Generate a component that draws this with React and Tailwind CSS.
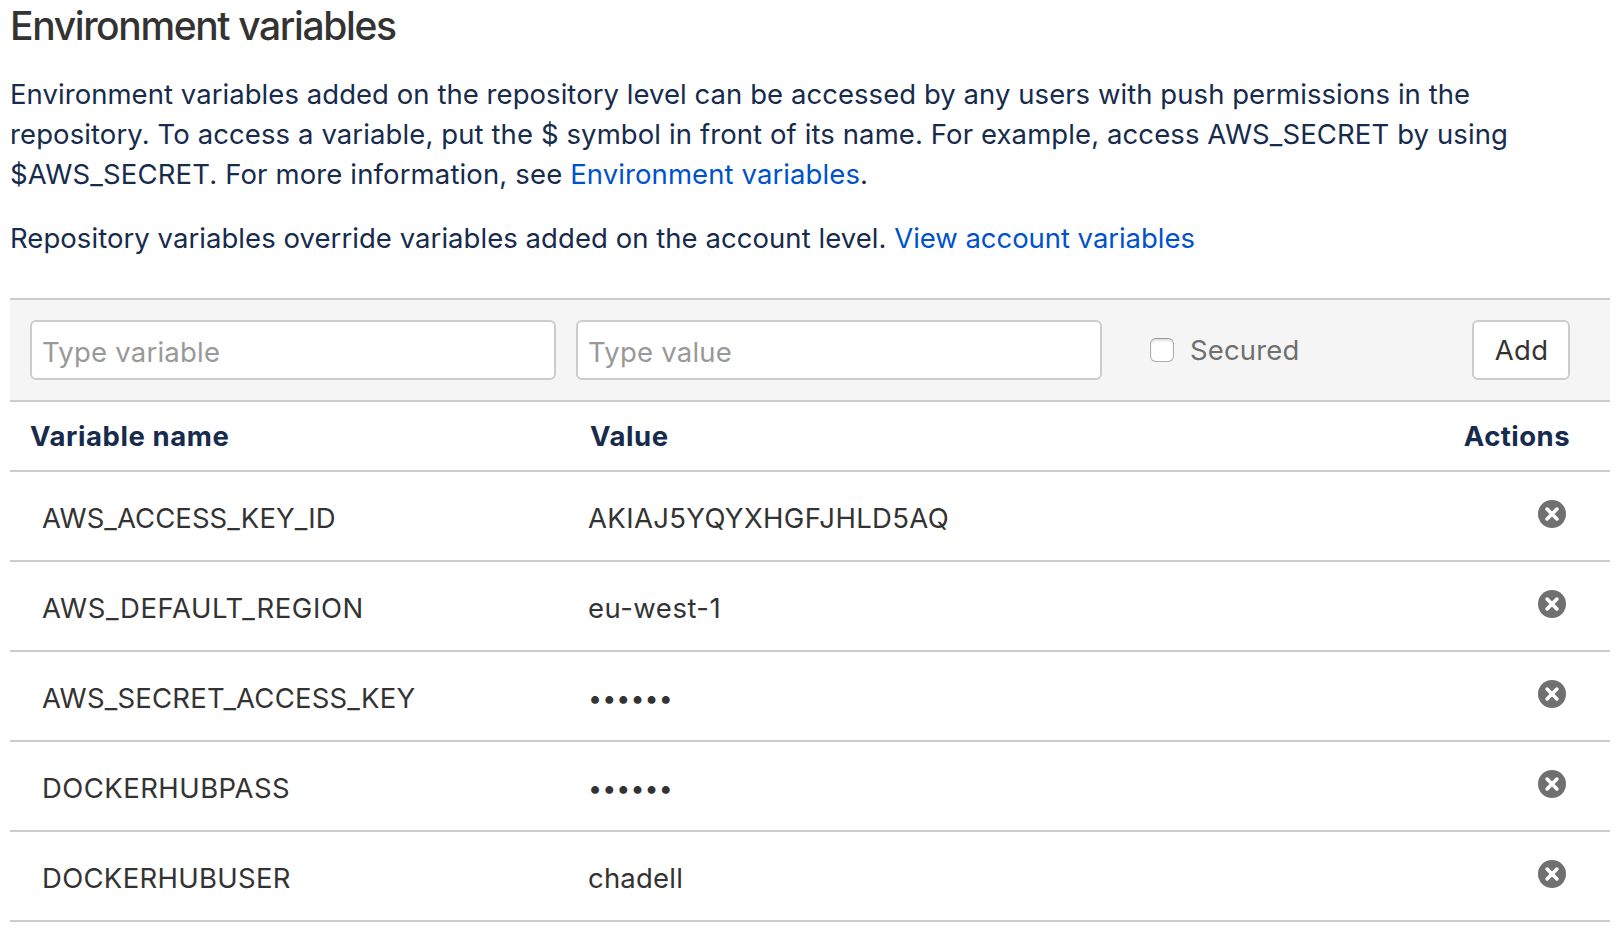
const variables = [
  { name: "AWS_ACCESS_KEY_ID", nameTracking: "tracking-[0.06px]", value: "AKIAJ5YQYXHGFJHLD5AQ", tracking: "tracking-[0.35px]" },
  { name: "AWS_DEFAULT_REGION", nameTracking: "tracking-[0.6px]", value: "eu-west-1", tracking: "tracking-[0.5px]" },
  { name: "AWS_SECRET_ACCESS_KEY", nameTracking: "tracking-[0.2px]", secured: true },
  { name: "DOCKERHUBPASS", nameTracking: "tracking-[0.45px]", secured: true },
  { name: "DOCKERHUBUSER", nameTracking: "tracking-[0.3px]", value: "chadell", tracking: "tracking-[0.2px]" },
];

function RemoveIcon() {
  return (
    <svg width="28" height="28" viewBox="0 0 28 28" className="block">
      <circle cx="14" cy="14" r="14" fill="#707070" />
      <path d="M9.1 9.1 18.9 18.9M18.9 9.1 9.1 18.9" stroke="#fff" strokeWidth="3.6" strokeLinecap="round" />
    </svg>
  );
}

function TextInput({ placeholder }) {
  return (
    <input
      type="text"
      placeholder={placeholder}
      className="h-[60px] w-[526px] rounded-[6px] border-2 border-[#ccc] bg-white px-[10px] pt-1 tracking-[0.23px] text-[#333] outline-none placeholder:text-[#999] placeholder:opacity-100"
    />
  );
}

function VariableRow({ name, nameTracking, value, secured, tracking }) {
  return (
    <div className="flex h-[90px] items-center border-b-2 border-[#ccc] pl-8 text-[#333]">
      <div className="w-[546px] pt-1">
        <span className={nameTracking}>{name}</span>
      </div>
      <div className="flex-1 pt-1">
        {secured ? (
          <span className="block text-[25px] leading-10 tracking-[0.08px]">••••••</span>
        ) : (
          <span className={tracking}>{value}</span>
        )}
      </div>
      <button type="button" aria-label="Remove" className="mr-11 mb-1">
        <RemoveIcon />
      </button>
    </div>
  );
}

export default function App() {
  return (
    <main className="h-[934px] overflow-hidden bg-white px-[10px] pt-[6px] font-[Inter,sans-serif] text-[27.5px] leading-10 text-[#172b4d]">
      <h1 className="text-[39px] leading-10 font-medium tracking-[-1.37px] text-[#333]">
        Environment variables
      </h1>
      <p className="mt-7 whitespace-nowrap">
        <span className="tracking-[0.05px]">
          Environment variables added on the repository level can be accessed by any users with push permissions in the
        </span>
        <br />
        <span className="tracking-[0.1px]">
          repository. To access a variable, put the $ symbol in front of its name. For example, access AWS_SECRET by using
        </span>
        <br />
        <span className="tracking-[0.14px]">
          $AWS_SECRET. For more information, see{" "}
          <a className="tracking-[0.09px] text-[#0052cc]">Environment variables</a>.
        </span>
      </p>
      <p className="mt-6 whitespace-nowrap tracking-[0.05px]">
        Repository variables override variables added on the account level.{" "}
        <a className="tracking-[-0.05px] text-[#0052cc]">View account variables</a>
      </p>

      <section className="mt-10 w-[1600px]">
        <form className="flex h-[104px] items-center border-y-2 border-[#ccc] bg-[#f5f5f5] pl-5">
          <TextInput placeholder="Type variable" />
          <div className="w-5" />
          <TextInput placeholder="Type value" />
          <label className="ml-12 flex flex-1 items-center gap-4 tracking-[0.16px] text-[#707070]">
            <span className="h-6 w-6 rounded-[6px] border border-[#acacac] border-t-[#989898] bg-white shadow-[inset_0_2px_2px_rgba(0,0,0,0.12)]" />
            Secured
          </label>
          <button type="button" className="mr-10 h-[60px] w-[98px] rounded-[6px] border-2 border-[#ccc] bg-white pl-px tracking-[0.3px] text-[#333]">
            Add
          </button>
        </form>

        <div className="flex h-[70px] items-center border-b-2 border-[#ccc] pl-5 font-bold">
          <div className="w-[560px] tracking-[0.58px]">Variable name</div>
          <div className="flex-1 tracking-[0.6px]">Value</div>
          <div className="mr-10 tracking-[0.45px]">Actions</div>
        </div>

        {variables.map((variable) => (
          <VariableRow key={variable.name} {...variable} />
        ))}
      </section>
    </main>
  );
}
